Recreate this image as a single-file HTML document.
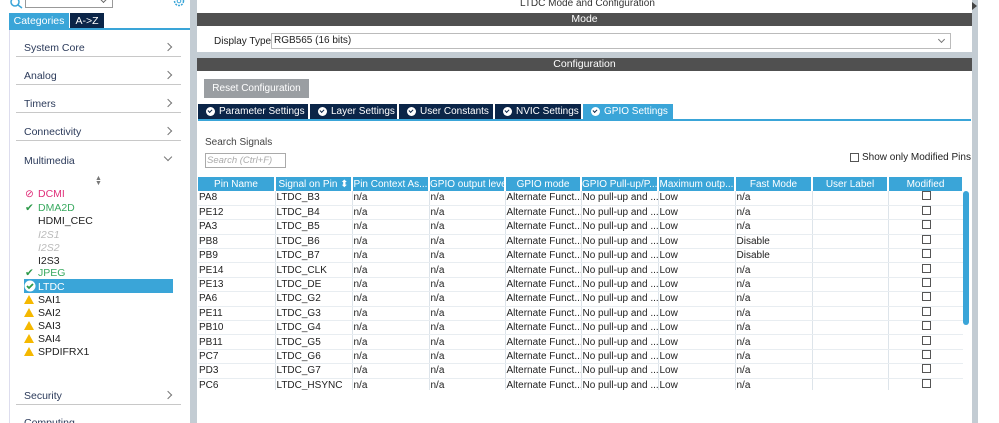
<!DOCTYPE html><html><head><style>
*{margin:0;padding:0;box-sizing:border-box}
html,body{width:999px;height:423px;overflow:hidden}
body{background:#fff;font-family:"Liberation Sans",sans-serif;font-size:10.5px;color:#222;position:relative}
.a{position:absolute;white-space:nowrap}
.cat{position:absolute;left:16px;width:165px;height:28px;border-bottom:1px solid #c8c8c8;color:#2b3a5a;font-size:10.5px}
.cat span{position:absolute;left:8px;bottom:2px}
.cat i{position:absolute;right:10px;bottom:6px;width:6px;height:6px;border-top:1px solid #777;border-right:1px solid #777;transform:rotate(45deg)}
.li{position:absolute;left:38px;font-size:10.5px}
.ic{position:absolute;left:25px;font-size:10.5px}
.tri{position:absolute;left:24px;width:0;height:0;border-left:5px solid transparent;border-right:5px solid transparent;border-bottom:9px solid #f5b800}
.bar{position:absolute;left:197px;width:775px;height:13px;background:#505050;color:#fff;text-align:center;font-size:10.5px;line-height:13px}
.tab{position:absolute;top:104px;height:15px;background:#0b2548;color:#fff;font-size:10px;line-height:15px;padding-left:21px;white-space:nowrap;overflow:hidden}
.tab:before{content:"";position:absolute;left:8px;top:3px;width:9px;height:9px;border-radius:50%;background:#fff}
.tab:after{content:"";position:absolute;left:10px;top:5px;width:3px;height:2px;border-left:1.5px solid #0b2548;border-bottom:1.5px solid #0b2548;transform:rotate(-45deg)}
table{position:absolute;left:198px;top:177px;border-collapse:collapse;table-layout:fixed;width:765px}
th{background:#3aa5d8;color:#fff;font-weight:normal;font-size:10px;height:14px;border-right:2px solid #fff;white-space:nowrap;overflow:hidden}
td{height:14.4px;border-right:1px solid #dde4ea;border-bottom:1px solid #e8edf1;font-size:10px;white-space:nowrap;overflow:hidden;padding-left:1px;line-height:13px}
.cb{display:inline-block;width:9px;height:9px;border:1px solid #555}
</style></head><body>
<div class="a" style="left:190px;top:0;width:6px;height:423px;background:#c3ccd3"></div>
<div class="a" style="left:9px;top:29px;width:181px;height:394px;border-left:1px solid #dde;"></div>
<svg class="a" style="left:10px;top:-3px" width="14" height="12"><circle cx="5" cy="5" r="4" fill="none" stroke="#3aa5d8" stroke-width="1.5"/><line x1="8" y1="8" x2="12" y2="11" stroke="#3aa5d8" stroke-width="1.5"/></svg>
<div class="a" style="left:25px;top:-2px;width:88px;height:10px;border:1px solid #999;border-top:none"></div>
<div class="a" style="left:101px;top:-3px;width:5px;height:5px;border-right:1px solid #666;border-bottom:1px solid #666;transform:rotate(45deg)"></div>
<svg class="a" style="left:172px;top:-4px" width="14" height="12"><circle cx="7" cy="5" r="4.5" fill="none" stroke="#3aa5d8" stroke-width="1.5" stroke-dasharray="2 1"/><circle cx="7" cy="5" r="1.8" fill="none" stroke="#3aa5d8"/></svg>
<div class="a" style="left:9px;top:13px;width:60px;height:16px;background:#3aa5d8;color:#fff;text-align:center;line-height:16px">Categories</div>
<div class="a" style="left:70px;top:13px;width:34px;height:16px;background:#0b2548;color:#fff;text-align:center;line-height:16px">A-&gt;Z</div>
<div class="a" style="left:9px;top:28px;width:181px;height:2px;background:#3aa5d8"></div>
<div class="cat" style="top:29px"><span>System Core</span><i></i></div>
<div class="cat" style="top:57px"><span>Analog</span><i></i></div>
<div class="cat" style="top:85px"><span>Timers</span><i></i></div>
<div class="cat" style="top:113px"><span>Connectivity</span><i></i></div>
<div class="cat" style="top:141px;border:none"><span>Multimedia</span><i style="transform:rotate(135deg);bottom:9px"></i></div>
<div class="a" style="left:95px;top:176px;font-size:7px;color:#777;line-height:5px">▲<br>▼</div>
<div class="a" style="left:24px;top:279px;width:149px;height:14px;background:#3aa5d8"></div>
<div class="ic" style="top:188px;color:#e0307a">⊘</div><div class="li" style="top:188px;color:#e0307a">DCMI</div>
<div class="ic" style="top:202px;color:#2e9a4a">✔</div><div class="li" style="top:202px;color:#3aaa60">DMA2D</div>
<div class="li" style="top:215px">HDMI_CEC</div>
<div class="li" style="top:229px;color:#bbb;font-style:italic">I2S1</div>
<div class="li" style="top:242px;color:#bbb;font-style:italic">I2S2</div>
<div class="li" style="top:255px">I2S3</div>
<div class="ic" style="top:267px;color:#2e9a4a">✔</div><div class="li" style="top:267px;color:#3aaa60">JPEG</div>
<svg class="a" style="left:24px;top:280px" width="12" height="12"><circle cx="6" cy="6" r="5.5" fill="#fff"/><path d="M3 6l2 2 4-4" stroke="#2e9a4a" stroke-width="1.8" fill="none"/></svg>
<div class="li" style="top:281px;color:#fff">LTDC</div>
<div class="tri" style="top:295px"></div><div class="li" style="top:294px">SAI1</div>
<div class="tri" style="top:308px"></div><div class="li" style="top:307px">SAI2</div>
<div class="tri" style="top:321px"></div><div class="li" style="top:320px">SAI3</div>
<div class="tri" style="top:334px"></div><div class="li" style="top:333px">SAI4</div>
<div class="tri" style="top:347px"></div><div class="li" style="top:346px">SPDIFRX1</div>
<div class="cat" style="top:377px"><span>Security</span><i></i></div>
<div class="a" style="left:24px;top:417px;color:#2b3a5a">Computing</div>
<div class="a" style="left:972px;top:0;width:6px;height:423px;background:#c3ccd3"></div>
<div class="a" style="left:972px;top:2px;width:0;height:0;border-top:4px solid transparent;border-bottom:4px solid transparent;border-left:5px solid #444"></div>
<div class="a" style="left:196px;top:0;width:1px;height:423px;background:#c3ccd3"></div>
<div class="a" style="left:520px;top:-2px;font-size:10px;color:#333">LTDC Mode and Configuration</div>
<div class="bar" style="top:13px">Mode</div>
<div class="a" style="left:214px;top:36px;font-size:10px">Display Type</div>
<div class="a" style="left:271px;top:33px;width:680px;height:16px;border:1px solid #bbb;padding-left:2px;line-height:14px;font-size:10px">RGB565 (16 bits)</div>
<div class="a" style="left:939px;top:37px;width:5px;height:5px;border-right:1px solid #777;border-bottom:1px solid #777;transform:rotate(45deg)"></div>
<div class="a" style="left:197px;top:52px;width:775px;height:6px;background:#c3ccd3"></div>
<div class="bar" style="top:58px">Configuration</div>
<div class="a" style="left:204px;top:79px;width:105px;height:19px;background:#9a9ea2;color:#fff;text-align:center;line-height:19px;font-size:10px">Reset Configuration</div>
<div class="tab" style="left:198px;width:110px">Parameter Settings</div>
<div class="tab" style="left:310px;width:87px">Layer Settings</div>
<div class="tab" style="left:399px;width:94px">User Constants</div>
<div class="tab" style="left:495px;width:86px">NVIC Settings</div>
<div class="tab" style="left:583px;width:90px;background:#3aa5d8">GPIO Settings</div>
<div class="a" style="left:198px;top:119px;width:773px;height:2px;background:#3aa5d8"></div>
<div class="a" style="left:205px;top:137px;color:#444;font-size:10px">Search Signals</div>
<div class="a" style="left:205px;top:153px;width:81px;height:15px;border:1px solid #aaa;color:#aaa;font-style:italic;font-size:9.5px;line-height:13px;padding-left:1px">Search (Ctrl+F)</div>
<div class="a" style="left:850px;top:153px;width:9px;height:9px;border:1px solid #555"></div>
<div class="a" style="left:862px;top:152px;font-size:10px">Show only Modified Pins</div>
<div class="a" style="left:963px;top:191px;width:6px;height:134px;background:#3aa5d8;border-radius:3px"></div>
<div class="a" style="left:197px;top:190px;width:766px;height:200px;overflow:hidden"><table style="left:1px;top:-13px">
<colgroup><col style="width:77px"><col style="width:77px"><col style="width:77px"><col style="width:76px"><col style="width:76px"><col style="width:77px"><col style="width:77px"><col style="width:77px"><col style="width:76px"><col style="width:75px"></colgroup>
<tr><th>Pin Name</th><th>Signal on Pin ⬍</th><th>Pin Context As...</th><th>GPIO output level</th><th>GPIO mode</th><th>GPIO Pull-up/P...</th><th>Maximum outp...</th><th>Fast Mode</th><th>User Label</th><th>Modified</th></tr>
<tr><td>PA8</td><td>LTDC_B3</td><td>n/a</td><td>n/a</td><td>Alternate Funct...</td><td>No pull-up and ...</td><td>Low</td><td>n/a</td><td></td><td align=center><span class=cb></span></td></tr>
<tr><td>PE12</td><td>LTDC_B4</td><td>n/a</td><td>n/a</td><td>Alternate Funct...</td><td>No pull-up and ...</td><td>Low</td><td>n/a</td><td></td><td align=center><span class=cb></span></td></tr>
<tr><td>PA3</td><td>LTDC_B5</td><td>n/a</td><td>n/a</td><td>Alternate Funct...</td><td>No pull-up and ...</td><td>Low</td><td>n/a</td><td></td><td align=center><span class=cb></span></td></tr>
<tr><td>PB8</td><td>LTDC_B6</td><td>n/a</td><td>n/a</td><td>Alternate Funct...</td><td>No pull-up and ...</td><td>Low</td><td>Disable</td><td></td><td align=center><span class=cb></span></td></tr>
<tr><td>PB9</td><td>LTDC_B7</td><td>n/a</td><td>n/a</td><td>Alternate Funct...</td><td>No pull-up and ...</td><td>Low</td><td>Disable</td><td></td><td align=center><span class=cb></span></td></tr>
<tr><td>PE14</td><td>LTDC_CLK</td><td>n/a</td><td>n/a</td><td>Alternate Funct...</td><td>No pull-up and ...</td><td>Low</td><td>n/a</td><td></td><td align=center><span class=cb></span></td></tr>
<tr><td>PE13</td><td>LTDC_DE</td><td>n/a</td><td>n/a</td><td>Alternate Funct...</td><td>No pull-up and ...</td><td>Low</td><td>n/a</td><td></td><td align=center><span class=cb></span></td></tr>
<tr><td>PA6</td><td>LTDC_G2</td><td>n/a</td><td>n/a</td><td>Alternate Funct...</td><td>No pull-up and ...</td><td>Low</td><td>n/a</td><td></td><td align=center><span class=cb></span></td></tr>
<tr><td>PE11</td><td>LTDC_G3</td><td>n/a</td><td>n/a</td><td>Alternate Funct...</td><td>No pull-up and ...</td><td>Low</td><td>n/a</td><td></td><td align=center><span class=cb></span></td></tr>
<tr><td>PB10</td><td>LTDC_G4</td><td>n/a</td><td>n/a</td><td>Alternate Funct...</td><td>No pull-up and ...</td><td>Low</td><td>n/a</td><td></td><td align=center><span class=cb></span></td></tr>
<tr><td>PB11</td><td>LTDC_G5</td><td>n/a</td><td>n/a</td><td>Alternate Funct...</td><td>No pull-up and ...</td><td>Low</td><td>n/a</td><td></td><td align=center><span class=cb></span></td></tr>
<tr><td>PC7</td><td>LTDC_G6</td><td>n/a</td><td>n/a</td><td>Alternate Funct...</td><td>No pull-up and ...</td><td>Low</td><td>n/a</td><td></td><td align=center><span class=cb></span></td></tr>
<tr><td>PD3</td><td>LTDC_G7</td><td>n/a</td><td>n/a</td><td>Alternate Funct...</td><td>No pull-up and ...</td><td>Low</td><td>n/a</td><td></td><td align=center><span class=cb></span></td></tr>
<tr><td>PC6</td><td>LTDC_HSYNC</td><td>n/a</td><td>n/a</td><td>Alternate Funct...</td><td>No pull-up and ...</td><td>Low</td><td>n/a</td><td></td><td align=center><span class=cb></span></td></tr>
</table></div>
<table style="top:177px"><colgroup><col style="width:77px"><col style="width:77px"><col style="width:77px"><col style="width:76px"><col style="width:76px"><col style="width:77px"><col style="width:77px"><col style="width:77px"><col style="width:76px"><col style="width:75px"></colgroup>
<tr><th>Pin Name</th><th>Signal on Pin ⬍</th><th>Pin Context As...</th><th>GPIO output level</th><th>GPIO mode</th><th>GPIO Pull-up/P...</th><th>Maximum outp...</th><th>Fast Mode</th><th>User Label</th><th>Modified</th></tr></table>
</body></html>
